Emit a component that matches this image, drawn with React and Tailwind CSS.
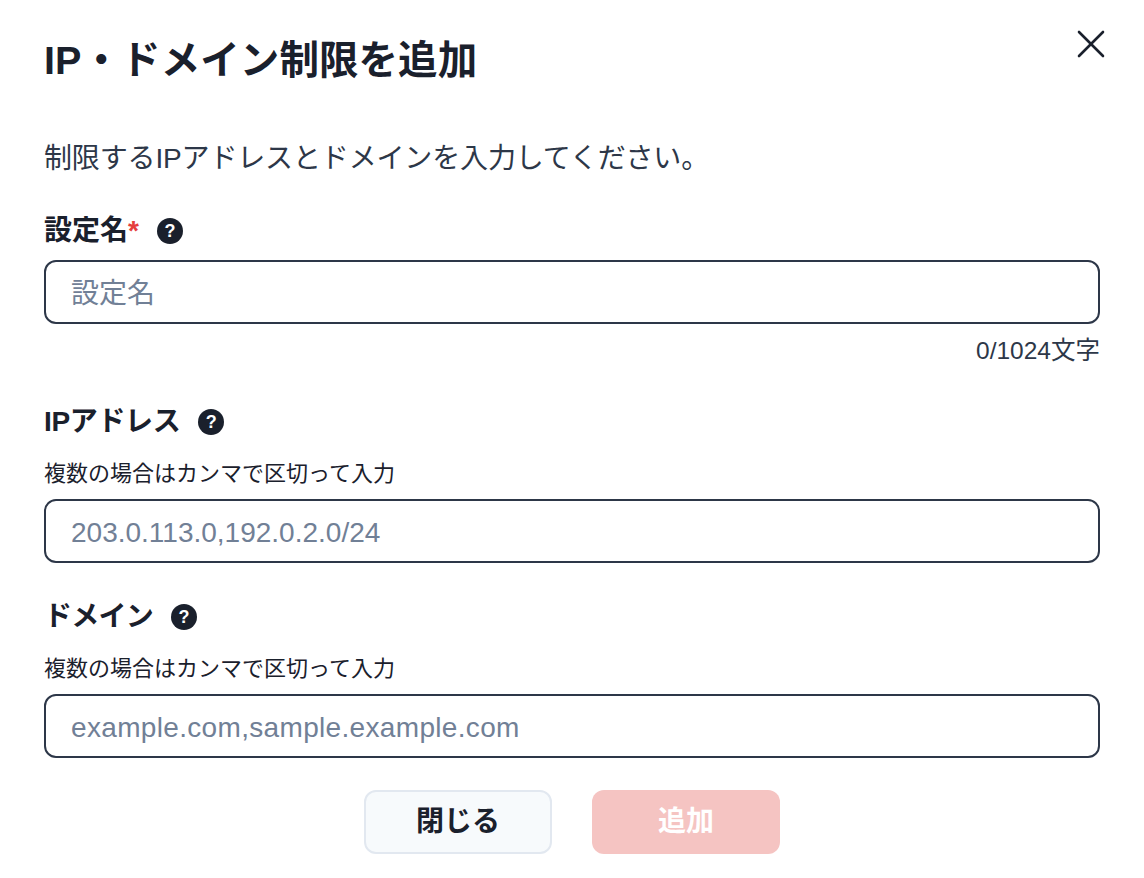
import { X } from 'lucide-react';

function HelpIcon() {
  return (
    <span className="w-[26px] h-[26px] rounded-full bg-[#1a202c] text-white flex items-center justify-center text-[18px] font-bold leading-none">
      ?
    </span>
  );
}

function Field({ placeholder, className = '' }) {
  return (
    <input
      readOnly
      placeholder={placeholder}
      className={`w-full h-[64px] px-[25px] pt-[4px] border-[2.5px] border-[#2d3748] rounded-[12px] bg-white text-[28px] outline-none placeholder:text-[#718096] ${className}`}
    />
  );
}

export default function App() {
  return (
    <div className="w-[1144px] h-[878px] bg-white text-[#1a202c] relative font-['Liberation_Sans','Noto_Sans_CJK_JP',sans-serif]">
      <button className="absolute top-[20px] right-[29px] text-[#1a202c]">
        <X size={48} strokeWidth={1.3} />
      </button>

      <div className="pl-[44px] pr-[44px] pt-[36px]">
        <h1 className="text-[39.5px] leading-[48px] tracking-[0.08px] font-bold">IP・ドメイン制限を追加</h1>
        <p className="mt-[53px] text-[28px] leading-[44px] tracking-[-0.15px] text-[#2d3748]">制限するIPアドレスとドメインを入力してください。</p>

        <div className="mt-[30px] flex items-center h-[40px] gap-[18px]">
          <label className="text-[28px] font-bold">
            設定名<span className="text-[#e53e3e]">*</span>
          </label>
          <HelpIcon />
        </div>
        <div className="mt-[9px]">
          <Field placeholder="設定名" />
        </div>
        <div className="mt-[8px] text-right text-[24.5px] leading-[38px] text-[#2d3748]">0/1024文字</div>

        <div className="mt-[32px] flex items-center h-[40px] gap-[18px]">
          <label className="text-[28px] font-bold tracking-[-0.35px]">IPアドレス</label>
          <HelpIcon />
        </div>
        <p className="mt-[16px] text-[22px] leading-[32px] text-[#1a202c]">複数の場合はカンマで区切って入力</p>
        <div className="mt-[9px]">
          <Field placeholder="203.0.113.0,192.0.2.0/24" />
        </div>

        <div className="mt-[34px] flex items-center h-[40px] gap-[18px]">
          <label className="text-[28px] font-bold tracking-[-0.75px]">ドメイン</label>
          <HelpIcon />
        </div>
        <p className="mt-[16px] text-[22px] leading-[32px] text-[#1a202c]">複数の場合はカンマで区切って入力</p>
        <div className="mt-[9px]">
          <Field placeholder="example.com,sample.example.com" className="tracking-[0.33px]" />
        </div>

        <div className="mt-[32px] flex justify-center gap-[40px]">
          <button className="w-[188px] h-[64px] rounded-[12px] border-[2px] border-[#e2e8f0] bg-[#f7fafc] text-[28px] font-bold">閉じる</button>
          <button className="w-[188px] h-[64px] rounded-[12px] bg-[#f5c4c2] text-white text-[28px] font-bold">追加</button>
        </div>
      </div>
    </div>
  );
}
